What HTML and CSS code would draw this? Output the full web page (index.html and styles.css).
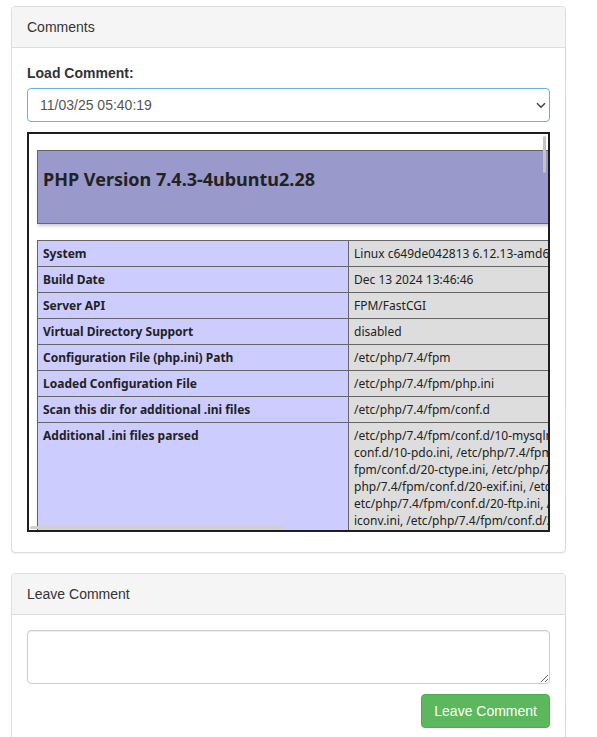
FILE: index.html
```html
<!DOCTYPE html>
<html>
<head>
<meta charset="utf-8">
<link rel="stylesheet" href="styles.css">
</head>
<body>
<div class="page">
  <div class="panel">
    <div class="panel-heading">Comments</div>
    <div class="panel-body">
      <label class="field-label">Load Comment:</label>
      <div class="select-wrap">
        <select class="select"><option>11/03/25 05:40:19</option></select>
        <svg class="chevron" width="10" height="7" viewBox="0 0 10 7"><path d="M1 1.2 L5 5.2 L9 1.2" fill="none" stroke="#444" stroke-width="1.5"/></svg>
      </div>
      <div class="frame">
        <div class="doc">
          <div class="center">
            <table class="h-table">
              <tr class="h"><td><div class="h-inner"><h1>PHP Version 7.4.3-4ubuntu2.28</h1></div></td></tr>
            </table>
            <table class="info">
              <tr><td class="e">System </td><td class="v">Linux c649de042813 6.12.13-amd64 #1 SMP PREEMPT_DYNAMIC Debian 6.12.13-1 (2025-02-10) x86_64 </td></tr>
              <tr><td class="e">Build Date </td><td class="v">Dec 13 2024 13:46:46 </td></tr>
              <tr><td class="e">Server API </td><td class="v">FPM/FastCGI </td></tr>
              <tr><td class="e">Virtual Directory Support </td><td class="v">disabled </td></tr>
              <tr><td class="e">Configuration File (php.ini) Path </td><td class="v">/etc/php/7.4/fpm </td></tr>
              <tr><td class="e">Loaded Configuration File </td><td class="v">/etc/php/7.4/fpm/php.ini </td></tr>
              <tr><td class="e">Scan this dir for additional .ini files </td><td class="v">/etc/php/7.4/fpm/conf.d </td></tr>
              <tr><td class="e">Additional .ini files parsed </td><td class="v v-list">/etc/php/7.4/fpm/conf.d/10-mysqlnd.ini, /etc/php/7.4/fpm/conf.d/10-opcache.ini, /etc/php/7.4/fpm/<br>conf.d/10-pdo.ini, /etc/php/7.4/fpm/conf.d/20-calendar.ini, /etc/php/7.4/<br>fpm/conf.d/20-ctype.ini, /etc/php/7.4/fpm/conf.d/20-dom.ini, /etc/<br>php/7.4/fpm/conf.d/20-exif.ini, /etc/php/7.4/fpm/conf.d/20-ffi.ini, /<br>etc/php/7.4/fpm/conf.d/20-ftp.ini, /etc/php/7.4/fpm/conf.d/20-gettext.ini, /etc/php/7.4/fpm/conf.d/20-<br>iconv.ini, /etc/php/7.4/fpm/conf.d/20-json.ini, /etc/php/7.4/fpm/conf.d/20-mysqli.ini,<br>/etc/php/7.4/fpm/conf.d/20-pdo_mysql.ini, /etc/php/7.4/fpm/conf.d/20-phar.ini </td></tr>
            </table>
          </div>
        </div>
        <div class="vthumb"></div>
        <div class="hthumb"></div>
      </div>
    </div>
  </div>
  <div class="panel">
    <div class="panel-heading">Leave Comment</div>
    <div class="panel-body">
      <textarea class="textarea"></textarea>
      <div class="actions"><button class="btn-success">Leave Comment</button></div>
    </div>
  </div>
</div>
</body>
</html>
```
FILE: styles.css
```css
html, body {
  margin: 0;
  padding: 0;
  background: #fff;
}
body {
  font-family: "Liberation Sans", Arial, sans-serif;
  font-size: 14px;
  line-height: 20px;
  color: #333;
}
.page {
  width: 555px;
  padding: 6px 0 0 11px;
}
.panel {
  border: 1px solid #ddd;
  border-radius: 4px;
  background: #fff;
  box-shadow: 0 1px 1px rgba(0,0,0,0.05);
  margin-bottom: 20px;
}
.panel-heading {
  background: #f5f5f5;
  border-bottom: 1px solid #ddd;
  border-radius: 3px 3px 0 0;
  padding: 10px 15px;
  color: #333;
}
.panel-body {
  padding: 15px;
}
.field-label {
  display: block;
  font-weight: bold;
  margin-bottom: 5px;
}
.select-wrap {
  position: relative;
  margin-bottom: 10px;
}
.select {
  display: block;
  width: 100%;
  height: 34px;
  box-sizing: border-box;
  padding: 6px 12px;
  font-family: "Liberation Sans", Arial, sans-serif;
  font-size: 14px;
  color: #555;
  background: #fff;
  border: 1px solid #66afe9;
  border-radius: 4px;
  -webkit-appearance: none;
  appearance: none;
  outline: none;
}
.chevron {
  position: absolute;
  left: 509px;
  top: 14px;
}
.frame {
  position: relative;
  height: 400px;
  box-sizing: border-box;
  border: 2px solid #1e1e1e;
  margin-bottom: 5px;
  background: #fff;
}
.doc {
  height: 100%;
  overflow: hidden;
  padding: 0 8px;
  font-family: "Noto Sans", sans-serif;
  color: #222;
}
.center table {
  border-collapse: collapse;
  border: 0;
  width: 934px;
  margin: 16px 0;
  box-shadow: 1px 2px 3px #ccc;
  text-align: left;
}
.center td {
  border: 1px solid #666;
  font-size: 12px;
  line-height: 17px;
  vertical-align: baseline;
  padding: 4px 5px;
}
.h td {
  background: #99c;
  font-weight: bold;
}
.h-inner {
  height: 64px;
  overflow: hidden;
}
.h-inner h1 {
  font-size: 18px;
  line-height: normal;
  margin: 12px 0 0;
  text-align: left;
}
.e {
  background: #ccf;
  width: 300px;
  font-weight: bold;
}
.v {
  background: #ddd;
  white-space: nowrap;
}
.vthumb {
  position: absolute;
  left: 514px;
  top: 2px;
  width: 3px;
  height: 37px;
  background: #c4c4c4;
  border-radius: 2px;
}
.hthumb {
  position: absolute;
  left: 1px;
  top: 392px;
  width: 253px;
  height: 3px;
  background: #cfcfcf;
  border-radius: 2px;
}
.textarea {
  display: block;
  width: 100%;
  height: 54px;
  box-sizing: border-box;
  padding: 6px 12px;
  border: 1px solid #ccc;
  border-radius: 4px;
  box-shadow: inset 0 1px 1px rgba(0,0,0,0.075);
  font-family: "Liberation Sans", Arial, sans-serif;
  font-size: 14px;
  margin: 0 0 10px;
}
.actions {
  display: flex;
  justify-content: flex-end;
}
.btn-success {
  height: 34px;
  padding: 6px 12px;
  font-family: "Liberation Sans", Arial, sans-serif;
  font-size: 14px;
  line-height: 20px;
  color: #fff;
  background: #5cb85c;
  border: 1px solid #4cae4c;
  border-radius: 4px;
}
```
